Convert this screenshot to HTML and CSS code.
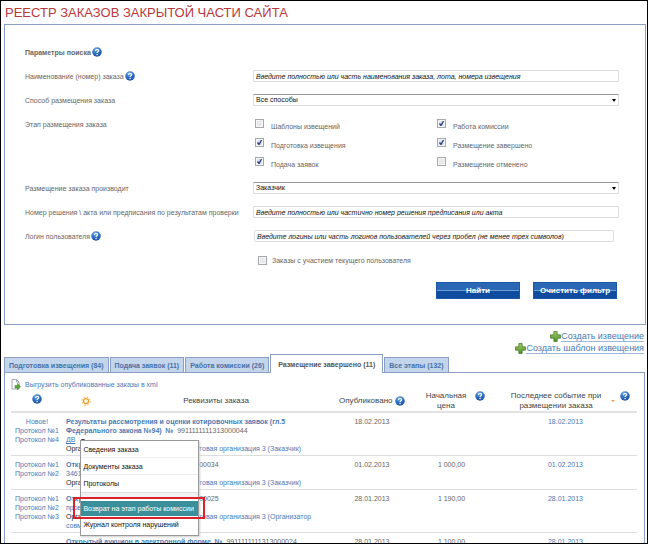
FILE: index.html
```
<!DOCTYPE html>
<html lang="ru">
<head>
  <meta charset="UTF-8">
  <title>Реестр заказов закрытой части сайта</title>
  <link rel="stylesheet" href="styles.css">
</head>
<body>

<svg class="sprite" aria-hidden="true">
  <defs>
    <radialGradient id="ball" cx="40%" cy="25%" r="80%">
      <stop offset="0" stop-color="#7fb2ee"/>
      <stop offset="0.5" stop-color="#2f6fc4"/>
      <stop offset="1" stop-color="#1c4f9f"/>
    </radialGradient>
    <linearGradient id="leaf" x1="0" y1="0" x2="0" y2="1">
      <stop offset="0" stop-color="#a5cf6c"/>
      <stop offset="1" stop-color="#4f9128"/>
    </linearGradient>
  </defs>
  <symbol id="help" viewBox="0 0 20 20">
    <circle cx="10" cy="10" r="9.5" fill="url(#ball)"/>
    <path d="M7 8c0-4 6.400-4 6.400-.6 0 2.200-3.200 2.200-3.200 4.400" fill="none" stroke="#fff" stroke-width="2.200"/>
    <circle cx="10.200" cy="15" r="1.400" fill="#fff"/>
  </symbol>
  <symbol id="plus" viewBox="0 0 20 20">
    <path d="M7 1h6v6h6v6h-6v6H7v-6H1V7h6z" fill="url(#leaf)" stroke="#4a7d2c" stroke-width="1.500" stroke-linejoin="round"/>
  </symbol>
</svg>

<div class="page">
  <h1>РЕЕСТР ЗАКАЗОВ ЗАКРЫТОЙ ЧАСТИ САЙТА</h1>

  <form class="filter">
    <div class="row">
      <strong class="label">Параметры поиска <svg class="help"><use href="#help"/></svg></strong>
    </div>
    <div class="row">
      <label class="label" for="name">Наименование (номер) заказа <svg class="help"><use href="#help"/></svg></label>
      <input type="text" id="name" value="Введите полностью или часть наименования заказа, лота, номера извещения">
    </div>
    <div class="row">
      <label class="label" for="method">Способ размещения заказа</label>
      <div class="select">
        <select id="method"><option>Все способы</option></select>
      </div>
    </div>
    <div class="row row-stages">
      <span class="label" id="stages">Этап размещения заказа</span>
      <div class="checks" role="group" aria-labelledby="stages">
        <label class="check"><input type="checkbox"><span>Шаблоны извещений</span></label>
        <label class="check"><input type="checkbox" checked><span>Работа комиссии</span></label>
        <label class="check"><input type="checkbox" checked><span>Подготовка извещения</span></label>
        <label class="check"><input type="checkbox" checked><span>Размещение завершено</span></label>
        <label class="check"><input type="checkbox" checked><span>Подача заявок</span></label>
        <label class="check"><input type="checkbox"><span>Размещение отменено</span></label>
      </div>
    </div>
    <div class="row">
      <label class="label" for="placer">Размещение заказа производит</label>
      <div class="select">
        <select id="placer"><option>Заказчик</option></select>
      </div>
    </div>
    <div class="row">
      <label class="label" for="decision">Номер решения \ акта или предписания по результатам проверки</label>
      <input type="text" id="decision" value="Введите полностью или частично номер решения предписания или акта">
    </div>
    <div class="row">
      <label class="label" for="login">Логин пользователя <svg class="help"><use href="#help"/></svg></label>
      <input type="text" id="login" class="login" value="Введите логины или часть логинов пользователей через пробел (не менее трех символов)">
    </div>
    <div class="row">
      <span></span>
      <label class="check check-own"><input type="checkbox"><span>Заказы с участием текущего пользователя</span></label>
    </div>
    <div class="actions">
      <button type="button">Найти</button>
      <button type="reset">Очистить фильтр</button>
    </div>
  </form>

  <div class="create">
    <div><svg class="plus"><use href="#plus"/></svg><a href="#">Создать извещение</a></div>
    <div><svg class="plus"><use href="#plus"/></svg><a href="#">Создать шаблон извещения</a></div>
  </div>

  <div class="tabs" role="tablist">
    <button class="tab" role="tab">Подготовка извещения (84)</button>
    <button class="tab" role="tab">Подача заявок (11)</button>
    <button class="tab" role="tab">Работа комиссии (26)</button>
    <button class="tab active" role="tab" aria-selected="true">Размещение завершено (11)</button>
    <button class="tab" role="tab">Все этапы (132)</button>
  </div>

  <div class="sheet">
    <div class="export">
      <svg class="doc" viewBox="0 0 20 22">
        <path d="M2 1h9l5 5v14H2z" fill="#fdfdfd" stroke="#8a9099" stroke-width="1.500"/>
        <path d="M11 1v5h5" fill="none" stroke="#8a9099" stroke-width="1.500"/>
        <path d="M8 13h5V9l6 6.500-6 6V18H8z" fill="#63a53a" stroke="#3f7d22"/>
      </svg>
      <a href="#">Выгрузить опубликованные заказы в xml</a>
    </div>

    <table>
      <thead>
        <tr>
          <th class="col-docs"><svg class="help"><use href="#help"/></svg></th>
          <th class="col-order">
            <div class="head">
              <svg class="sun" viewBox="0 0 20 20">
                <circle cx="10" cy="10" r="8" fill="none" stroke="#f6cd7c" stroke-width="3" stroke-dasharray="3.300 3"/>
                <circle cx="10" cy="10" r="5" fill="#fffbe8" stroke="#f0a030" stroke-width="2.500"/>
              </svg>
              <span class="head-text">Реквизиты заказа</span>
            </div>
          </th>
          <th class="col-date">
            <div class="head"><span>Опубликовано</span><svg class="help"><use href="#help"/></svg></div>
          </th>
          <th class="col-price">
            <div class="head head-top"><span class="head-text">Начальная<br>цена</span><svg class="help"><use href="#help"/></svg></div>
          </th>
          <th class="col-last">
            <div class="head head-top">
              <span class="head-text">Последнее событие при<br>размещении заказа</span>
              <span class="sort"></span>
              <svg class="help"><use href="#help"/></svg>
            </div>
          </th>
        </tr>
      </thead>
      <tbody>
        <tr>
          <td class="docs"><a href="#">Новое!</a><br><a href="#">Протокол №1</a><br><a href="#">Протокол №4</a></td>
          <td class="order">
            <a href="#"><b>Результаты рассмотрения и оценки котировочных заявок (гл.5<br>Федерального закона №94)&nbsp; №</b></a>&nbsp; 9911111111313000044<br>
            <a href="#" class="subject">ДВ</a><span class="dropdown">
              <span class="caret"></span>
              <span class="menu" role="menu">
                <button class="item" role="menuitem">Сведения заказа</button>
                <button class="item" role="menuitem">Документы заказа</button>
                <button class="item last" role="menuitem">Протоколы</button>
                <span class="gap"></span>
                <button class="item selected" role="menuitem">Возврат на этап работы комиссии</button>
                <button class="item last" role="menuitem">Журнал контроля нарушений</button>
              </span>
            </span><br>
            <span class="who">Организация, разместившая заказы:</span> <a href="#">Тестовая организация 3 (Заказчик)</a>
          </td>
          <td>18.02.2013</td>
          <td></td>
          <td class="last-event"><a href="#">18.02.2013</a></td>
        </tr>
        <tr>
          <td class="docs"><a href="#">Протокол №1</a><br><a href="#">Протокол №2</a></td>
          <td class="order">
            <a href="#"><b>Открытый аукцион&nbsp; №</b></a>&nbsp; 9911111111313000034<br>
            <a href="#">3461</a><br>
            <span class="who">Организация, разместившая заказы:</span> <a href="#">Тестовая организация 3 (Заказчик)</a>
          </td>
          <td>01.02.2013</td>
          <td class="price">1 000,00</td>
          <td class="last-event"><a href="#">01.02.2013</a></td>
        </tr>
        <tr>
          <td class="docs"><a href="#">Протокол №1</a><br><a href="#">Протокол №2</a><br><a href="#">Протокол №3</a></td>
          <td class="order">
            <a href="#"><b>Открытый аукцион&nbsp; №</b></a>&nbsp; 9911111111313000025<br>
            <a href="#">проведение</a><br>
            <span class="who">Организация, разместившая заказы:</span> <a href="#">Тестовая организация 3 (Организатор<br>совместных торгов)</a>
          </td>
          <td>28.01.2013</td>
          <td class="price">1 190,00</td>
          <td class="last-event"><a href="#">28.01.2013</a></td>
        </tr>
        <tr>
          <td class="docs"></td>
          <td class="order"><a href="#"><b>Открытый аукцион в электронной форме&nbsp; №</b></a>&nbsp; 9911111111313000024</td>
          <td>28.01.2013</td>
          <td class="price">1 100,00</td>
          <td class="last-event"><a href="#">28.01.2013</a></td>
        </tr>
      </tbody>
    </table>
  </div>
</div>

</body>
</html>
```
FILE: styles.css
```
* {
  box-sizing: border-box;
}

body {
  margin: 0;
  font-family: "Liberation Sans", Arial, sans-serif;
  font-size: 7px;
  line-height: 9px;
  color: #666;
  background-color: #fff;
}

a {
  color: #4a7ab5;
  text-decoration: none;
}

input,
select,
button {
  font: inherit;
  margin: 0;
}

.sprite {
  position: absolute;
  width: 0;
  height: 0;
}

.page {
  height: 100vh;
  overflow: hidden;
  border: 1px solid #000;
  padding: 0 1px 0 3px;
}

h1 {
  margin: 0;
  padding: 4px 1px 3px;
  font-size: 13px;
  line-height: 16px;
  font-weight: normal;
  color: #b9383d;
}

.help {
  width: 10px;
  height: 10px;
  flex: none;
}

/* Фильтр */
.filter {
  border: 1px solid #8b9fc4;
  padding: 15px 26px 25px 20px;
}

.row {
  display: grid;
  grid-template-columns: 228px 1fr;
  align-items: center;
  min-height: 24px;
}

.label {
  display: flex;
  align-items: center;
  gap: 1px;
  white-space: nowrap;
}

.row input[type="text"],
.row select {
  width: 100%;
  height: 12px;
  padding: 0 2px;
  border: 1px solid #ddd;
  border-radius: 1px;
  background-color: #fff;
  color: #111;
  line-height: 10px;
}

.row input[type="text"] {
  font-style: italic;
}

.row input.login {
  width: auto;
  margin: 0 5px 0 1px;
}

.select {
  position: relative;
}

.row select {
  display: block;
  appearance: none;
  border-top-color: #999;
}

.select::after {
  content: "";
  position: absolute;
  right: 3px;
  top: 5px;
  border: 2px solid transparent;
  border-top: 3px solid #000;
  pointer-events: none;
}

.row-stages {
  align-items: start;
}

.row-stages .label {
  height: 24px;
}

.checks {
  display: grid;
  grid-template-columns: 1fr 1fr;
  padding: 7px 0 0 2px;
}

.check {
  display: flex;
  gap: 7px;
  height: 19px;
}

.check span {
  padding-top: 3px;
}

.check input {
  appearance: none;
  width: 9px;
  height: 9px;
  border: 1px solid #a5a9ae;
  background: #e9e9ea;
  box-shadow: inset 0 0 0 1px #f5f5f5;
}

.check input:checked {
  background: #dbe3f3 url("data:image/svg+xml,%3Csvg xmlns='http://www.w3.org/2000/svg' viewBox='0 0 7 7'%3E%3Cpath d='M1.500 3.500L3 5.500L5.500 1' fill='none' stroke='%23283f7c' stroke-width='1.300'/%3E%3C/svg%3E");
}

.check-own {
  height: auto;
  padding-left: 5px;
  gap: 5px;
}

.check-own span {
  padding: 0;
}

.actions {
  display: flex;
  justify-content: flex-end;
  gap: 13px;
  padding: 10px 2px 0 0;
}

.actions button {
  width: 84px;
  height: 17px;
  padding: 0;
  border: 1px solid #1c57a5;
  background: linear-gradient(#2a68b5 0 45%, #6f9bd3 45% 52%, #0f4c9f 52%);
  color: #fff;
  font-size: 8px;
  font-weight: bold;
}

/* Ссылки создания */
.create {
  padding: 5px 2px 0 0;
  font-size: 9px;
}

.create div {
  display: flex;
  justify-content: flex-end;
  align-items: center;
  height: 12px;
}

.create a {
  line-height: 10px;
  border-bottom: 1px solid #9db6da;
}

.plus {
  width: 11px;
  height: 11px;
}

/* Вкладки */
.tabs {
  display: flex;
  align-items: flex-end;
  gap: 1px;
}

.tab {
  height: 15px;
  padding: 0 4px;
  border: 1px solid #8b9fc4;
  border-bottom: 0;
  background-color: #c3d5ea;
  color: #4a70a8;
  font-weight: bold;
  white-space: nowrap;
}

.tab.active {
  height: 19px;
  margin-bottom: -1px;
  padding: 0 7px;
  background-color: #fff;
  color: #555;
  position: relative;
}

.sheet {
  border: 1px solid #8b9fc4;
  border-bottom: 0;
  padding: 5px 7px 0 6px;
  margin-right: 1px;
}

.export {
  display: flex;
  align-items: center;
  gap: 4px;
  height: 12px;
}

.doc {
  width: 10px;
  height: 11px;
}

/* Таблица заказов */
table {
  width: 100%;
  table-layout: fixed;
  border-collapse: collapse;
}

th {
  height: 22px;
  padding: 0;
  border-bottom: 2px solid #e2e2e2;
  font-size: 8px;
  font-weight: normal;
  line-height: 10px;
  color: #444;
  vertical-align: middle;
}

.col-docs {
  width: 51px;
}

.col-date {
  width: 66px;
}

.col-price {
  width: 85px;
}

.col-last {
  width: 147px;
}

.head {
  display: flex;
  align-items: center;
  gap: 2px;
}

.head-text {
  flex: 1;
}

.head-top {
  align-items: flex-start;
}

.col-order .head {
  padding-left: 19px;
}

.col-price .head {
  padding: 0 5px 0 14px;
}

.col-last .head {
  padding: 0 7px 0 13px;
}

.sun {
  width: 10px;
  height: 10px;
}

.sort {
  margin: 9px 3px 0 0;
  border: 2px solid transparent;
  border-top-color: #f09a4a;
}

td {
  padding: 4px 0 2px;
  border-bottom: 1px solid #ddd;
  text-align: center;
  vertical-align: top;
}

td.docs {
  padding-left: 1px;
}

td.order {
  padding-left: 4px;
  text-align: left;
  white-space: nowrap;
}

td.price {
  padding-left: 8px;
}

td.last-event {
  padding-left: 4px;
}

.who {
  color: #222;
}

.subject {
  text-decoration: underline;
}

/* Выпадающее меню */
.dropdown {
  position: relative;
  display: inline-block;
  margin-left: 6px;
}

.caret {
  display: inline-block;
  border: 2px solid transparent;
  border-top: 3px solid #333;
  border-bottom: 0;
}

.menu {
  position: absolute;
  z-index: 1;
  top: 5px;
  left: -1px;
  width: 119px;
  padding-bottom: 2px;
  border: 1px solid #999;
  background-color: #fff;
  box-shadow: 1px 1px 2px #ccc;
}

.item {
  display: block;
  width: 100%;
  height: 17px;
  padding: 0 2px;
  border: 0;
  border-bottom: 1px solid #eee;
  background-color: transparent;
  color: #111;
  text-align: left;
  white-space: nowrap;
}

.item.last {
  border-bottom: 0;
}

.gap {
  display: block;
  height: 7px;
  margin-bottom: 2px;
  border-top: 1px solid #ddd;
  background-color: #f1f1f1;
}

.item.selected {
  position: relative;
  height: 15px;
  border: 0;
  background-color: #3b8f9b;
  color: #fff;
}

.item.selected::after {
  content: "";
  position: absolute;
  inset: -4px -7px -3px -8px;
  border: 2px solid #d9222a;
}
```
